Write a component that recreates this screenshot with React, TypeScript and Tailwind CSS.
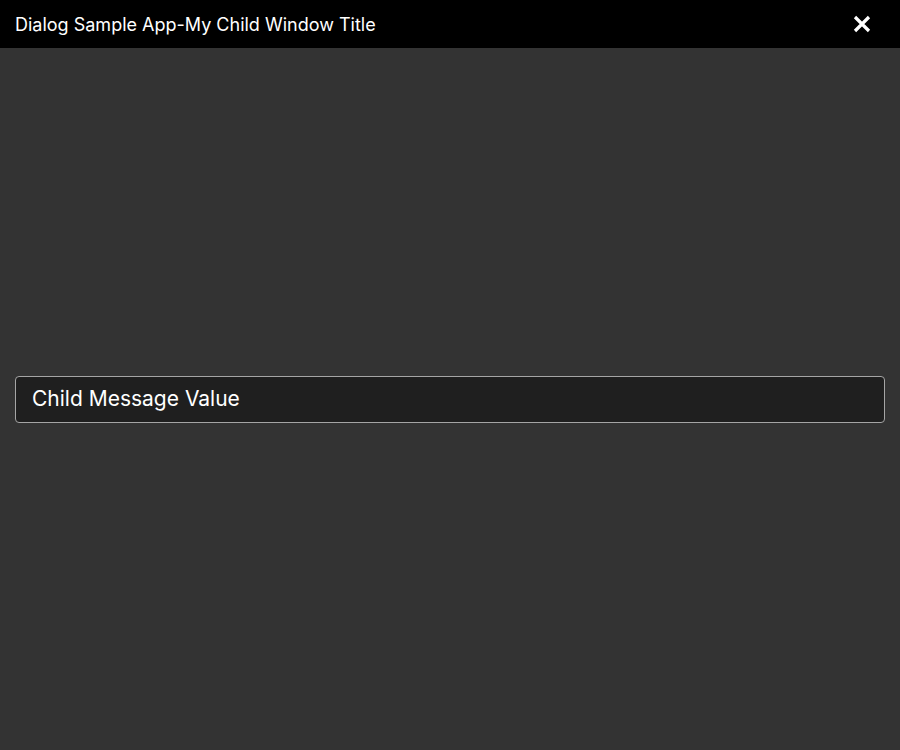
import React from "react";

export default function App() {
  return (
    <div className="w-[900px] h-[750px] flex flex-col bg-[#333333]" style={{ fontFamily: "Inter, 'Noto Sans', sans-serif" }}>
      <div className="h-[48px] bg-black flex items-center justify-between pl-[15px] pr-[29px] shrink-0">
        <span className="text-[18px] text-white pt-[1px]">Dialog Sample App-My Child Window Title</span>
        <svg width="18" height="18" viewBox="0 0 18 18">
          <path d="M2 2 L16 16 M16 2 L2 16" stroke="white" strokeWidth="3.2" strokeLinecap="butt" />
        </svg>
      </div>
      <div className="flex-1 flex items-center px-[15px]">
        <div className="w-full h-[47px] rounded-[4px] border-[1.5px] border-[#a5a5a5] bg-[#1f1f1f] flex items-center px-[16px]">
          <span className="text-[21px] text-white">Child Message Value</span>
        </div>
      </div>
    </div>
  );
}
